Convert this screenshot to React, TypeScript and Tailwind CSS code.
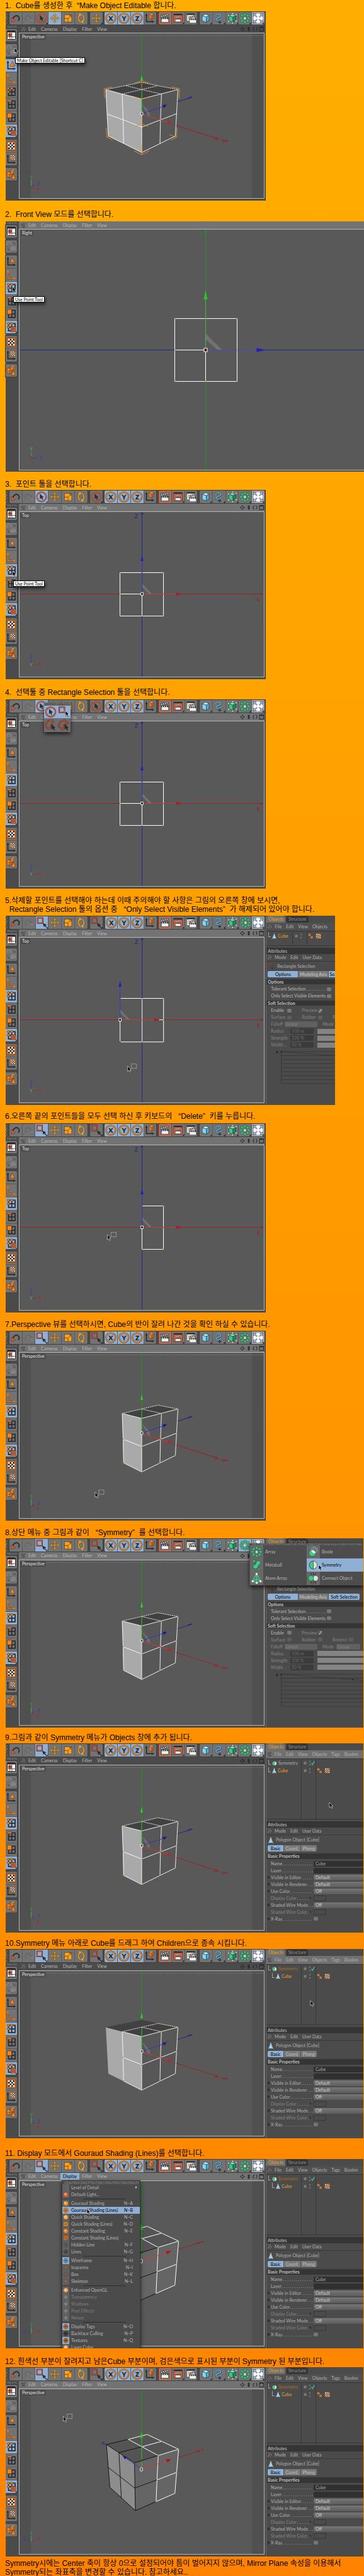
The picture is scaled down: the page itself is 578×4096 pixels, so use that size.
import React from "react";
import clsx from "clsx";

type Tool = "move" | "live" | "rect";

/* ---------- icon parts ---------- */

const INK = "#2b2b2b";
const ORANGE = "#f08326";

const Pointer = ({ x, y, s = 1 }: { x: number; y: number; s?: number }) => (
  <path
    d="M0 0V9L2.2 7L3.8 10.4L5.4 9.6L3.8 6.4H6.6Z"
    transform={`translate(${x} ${y}) scale(${s})`}
    fill={INK}
  />
);

const Axes = ({ color = INK, w = 1.8 }: { color?: string; w?: number }) => (
  <g stroke={color} fill={color} strokeWidth={w}>
    <path d="M3.5 5V15.5H13" fill="none" />
    <path d="M3.5 2.5L5 6H2ZM16 15.5L12.5 17V14Z" strokeWidth="0.5" />
  </g>
);

const Grid = () => (
  <path d="M4.5 4.5H15V16H4.5ZM9.7 4.5V16M4.5 10.2H15" fill="none" stroke={INK} strokeWidth="1.8" />
);

const Dots = () => (
  <g fill={ORANGE} stroke="#5a3212" strokeWidth="0.6">
    <circle cx="4" cy="4.5" r="1.9" />
    <circle cx="9.5" cy="4.5" r="1.9" />
    <circle cx="4" cy="10" r="1.9" />
  </g>
);

const Checker = ({ x, y, s }: { x: number; y: number; s: number }) => (
  <g transform={`translate(${x} ${y}) scale(${s})`}>
    <rect width="14" height="14" rx="0.6" fill={ORANGE} stroke="#5a2a12" strokeWidth="0.8" />
    <rect x="2" y="2" width="10" height="10" fill="#f4f4f4" />
    <path
      d="M4.5 2H7V4.5H4.5ZM9.5 2H12V4.5H9.5ZM2 4.5H4.5V7H2ZM7 4.5H9.5V7H7ZM4.5 7H7V9.5H4.5ZM9.5 7H12V9.5H9.5ZM2 9.5H4.5V12H2ZM7 9.5H9.5V12H7Z"
      fill="#1d2126"
    />
  </g>
);

const Clapper = ({ x, y, s = 1 }: { x: number; y: number; s?: number }) => (
  <g transform={`translate(${x} ${y}) scale(${s})`}>
    <path d="M0 3.2L11 0L11.6 2.4L0.8 5.6Z" fill="#f2f2f2" stroke={INK} strokeWidth="0.6" />
    <path d="M2 2.8L4 4.5M5 1.9L7 3.6M8 1L10 2.7" stroke={INK} strokeWidth="1.2" />
    <path d="M1 6H12.5V13.5H1Z" fill="#efefef" stroke={INK} strokeWidth="0.6" />
    <path d="M1 6H12.5V8.3H1Z" fill={INK} />
    <path d="M2.4 8L3.6 6.2M5.6 8L6.8 6.2M8.8 8L10 6.2" stroke="#f2f2f2" strokeWidth="1.1" />
  </g>
);

const Box = ({ x, y, s = 1, face, top, side }: { x: number; y: number; s?: number; face: string; top: string; side: string }) => (
  <g transform={`translate(${x} ${y}) scale(${s})`} stroke="#26323a" strokeWidth="0.6" strokeLinejoin="round">
    <path d="M0 2.5L6.5 4.5V13L0 10.5Z" fill={face} />
    <path d="M6.5 4.5L11 2V9.8L6.5 13Z" fill={side} />
    <path d="M0 2.5L5 0L11 2L6.5 4.5Z" fill={top} />
  </g>
);

const Flower = () => (
  <g fill="#3fc07e" stroke="#1d5a3b" strokeWidth="0.6">
    <circle cx="10" cy="4" r="2.2" />
    <circle cx="14.4" cy="5.8" r="2.2" />
    <circle cx="16" cy="10" r="2.2" />
    <circle cx="14.4" cy="14.2" r="2.2" />
    <circle cx="10" cy="16" r="2.2" />
    <circle cx="5.6" cy="14.2" r="2.2" />
    <circle cx="4" cy="10" r="2.2" />
    <circle cx="5.6" cy="5.8" r="2.2" />
    <rect x="8" y="8" width="4" height="4.4" fill="#d5d5d5" stroke="#5a5a5a" />
  </g>
);

const MoveGlyph = () => (
  <path
    d="M10 2.5L12.4 5.6H10.8V9.2H14.4V7.6L17.5 10L14.4 12.4V10.8H10.8V14.4H12.4L10 17.5L7.6 14.4H9.2V10.8H5.6V12.4L2.5 10L5.6 7.6V9.2H9.2V5.6H7.6Z"
    fill="#f7a823"
    stroke="#5a3a12"
    strokeWidth="0.5"
  />
);

const LiveGlyph = () => (
  <g>
    <circle cx="10" cy="10" r="7.6" fill="none" stroke="#6b2f1e" strokeWidth="2.2" />
    <circle cx="10" cy="10" r="7.6" fill="none" stroke="#e0623c" strokeWidth="1.2" />
    <Pointer x={7.4} y={5} s={0.95} />
  </g>
);

const RectGlyph = () => (
  <g>
    <rect x="2.6" y="2.4" width="8.4" height="8.4" fill="none" stroke="#5e2417" strokeWidth="2" />
    <rect x="2.6" y="2.4" width="8.4" height="8.4" fill="none" stroke="#d9583a" strokeWidth="0.9" />
    <path d="M11 10.5L17.5 13.5L15.4 14.5L17.8 17.4L16.6 18.2L14.3 15.4L13 17.4Z" fill={INK} />
  </g>
);

const toolGlyph = { move: <MoveGlyph />, live: <LiveGlyph />, rect: <RectGlyph /> };

const AxisLetter = ({ letter }: { letter: string }) => (
  <g>
    <circle cx="10" cy="10" r="7.6" fill="none" stroke="#5c3a17" strokeWidth="2.4" />
    <circle cx="10" cy="10" r="7.6" fill="none" stroke="#ee8d33" strokeWidth="1.3" />
    <text x="10" y="13.6" textAnchor="middle" fontSize="10" fontWeight="900" fill="#20262c" stroke="#20262c" strokeWidth="0.4" fontFamily="Lato, sans-serif">
      {letter}
    </text>
  </g>
);

const Corner = () => <path d="M19.5 16.5V19.5H17Z" fill="#111" />;

/* ---------- main toolbar ---------- */

const ToolButton = ({ label, active, children }: { label: string; active?: boolean; children: React.ReactNode }) => (
  <button
    type="button"
    aria-label={label}
    className={clsx("min-w-0 flex-1 border-r border-[#585858] last:border-r-0", active ? "bg-[#8fb0d4]" : "bg-[#737373]")}
  >
    <svg viewBox="0 0 20 20" className="block h-full w-full">
      {children}
    </svg>
  </button>
);

const Group = ({ className, children }: { className: string; children: React.ReactNode }) => (
  <div className={clsx("flex h-5 overflow-hidden rounded-xs shadow-[0_0_0_1px_#3e3e3e]", className)}>{children}</div>
);

const Grip = ({ className }: { className: string }) => (
  <span className={clsx("block bg-[repeating-linear-gradient(115deg,#808080_0_1px,#3e3e3e_1px_2px)]", className)} />
);

const Toolbar = ({ tool, recent, arrayOpen }: { tool: Tool; recent: Tool; arrayOpen?: boolean }) => (
  <div className="flex h-[22px] items-start justify-between bg-[#4b4b4b] pt-px pr-[2px]">
    <Grip className="h-5 w-[2px]" />
    <Group className="w-[124px]">
      <ToolButton label="Undo">
        <path d="M5 12C7 6 12 4.5 14.5 7.5C16.5 10 15.5 12.5 14 14" fill="none" stroke={INK} strokeWidth="1.8" />
        <path d="M3 9L9.5 14L3.2 16Z" fill="#dc5a3a" stroke="#5e2417" strokeWidth="0.5" />
      </ToolButton>
      <ToolButton label="Redo">
        <path d="M15 12C13 6 8 4.5 5.5 7.5C3.5 10 4.5 12.5 6 14" fill="none" stroke="#686868" strokeWidth="1.8" />
        <path d="M17 9L10.5 14L16.8 16Z" fill="#7e7e7e" stroke="#666" strokeWidth="0.5" />
      </ToolButton>
      <ToolButton label="Selection" active={tool !== "move"}>
        {tool === "rect" ? <RectGlyph /> : <LiveGlyph />}
        <Corner />
      </ToolButton>
      <ToolButton label="Move" active={tool === "move"}>
        <MoveGlyph />
      </ToolButton>
      <ToolButton label="Scale">
        <rect x="4.5" y="4.5" width="11.5" height="11.5" fill="#f5a321" stroke="#5a3a12" strokeWidth="0.6" />
        <path d="M4.5 10.5H10V16M10 10.5L15 5.5M12 5.5H15V8.5" fill="none" stroke="#6b4210" strokeWidth="0.9" />
      </ToolButton>
      <ToolButton label="Rotate">
        <g fill="none" stroke="#5a3a12" strokeWidth="2.6">
          <path d="M8.5 15.5A6 6.6 0 0 1 7.5 4.8M11.5 4.5A6 6.6 0 0 1 12.5 15.2" />
        </g>
        <g fill="none" stroke="#f5a321" strokeWidth="1.8">
          <path d="M8.5 15.5A6 6.6 0 0 1 7.5 4.8M11.5 4.5A6 6.6 0 0 1 12.5 15.2" />
        </g>
        <path d="M6 2.5L11 3.5L7.5 7ZM14 17.5L9 16.5L12.5 13Z" fill="#f5a321" />
      </ToolButton>
    </Group>
    <Group className="w-5">
      <ToolButton label="Recent tool">
        {toolGlyph[recent]}
        <Corner />
      </ToolButton>
    </Group>
    <Group className="w-[82px]">
      {["X", "Y", "Z"].map((letter) => (
        <ToolButton key={letter} label={`Lock ${letter}`} active>
          <AxisLetter letter={letter} />
        </ToolButton>
      ))}
      <ToolButton label="Coordinate system">
        <Axes />
        <Box x={7.5} y={2} s={0.75} face="#e87722" side="#c65f16" top="#f29b4e" />
      </ToolButton>
    </Group>
    <Group className="w-[61px]">
      <ToolButton label="Render view">
        <rect x="1" y="1" width="18" height="18" fill="none" stroke="#e2603a" strokeWidth="1.6" />
        <Clapper x={3.4} y={3} />
      </ToolButton>
      <ToolButton label="Render region">
        <rect x="3" y="3" width="13.5" height="13.5" fill="#e2603a" stroke="#5e2417" strokeWidth="0.6" />
        <path d="M3 3H16.5V5.2H3Z" fill={INK} />
        <Clapper x={5} y={6} s={0.72} />
        <Corner />
      </ToolButton>
      <ToolButton label="Render settings">
        <rect x="2.5" y="2.5" width="13" height="12" fill="#ececec" stroke="#444" strokeWidth="0.6" />
        <path d="M2.5 2.5H15.5V4.7H2.5Z" fill={INK} />
        <path d="M3.5 6.5H7M3.5 9H7M3.5 11.5H7" stroke="#e8a23d" strokeWidth="1" />
        <Clapper x={6} y={5} s={0.95} />
      </ToolButton>
    </Group>
    <Group className="w-[103px]">
      <ToolButton label="Primitives">
        <Box x={4.2} y={3.5} s={1} face="#8ed4ef" side="#4fa9cf" top="#bfe9f8" />
        <Corner />
      </ToolButton>
      <ToolButton label="Splines">
        <path d="M4 5.5C7 1.5 14 3 12.5 7C11.5 10 4.5 8.5 5 12C5.4 14.5 9 14 14.5 10.5" fill="none" stroke="#1f3a4c" strokeWidth="2.4" />
        <path d="M4 5.5C7 1.5 14 3 12.5 7C11.5 10 4.5 8.5 5 12C5.4 14.5 9 14 14.5 10.5" fill="none" stroke="#79c4e6" strokeWidth="1.3" />
        <path d="M11 14V19M8.5 16.5H13.5" stroke="#1a1a1a" strokeWidth="0.9" />
        <Corner />
      </ToolButton>
      <ToolButton label="Generators">
        <Box x={4.6} y={3.5} s={1} face="#3fc585" side="#1f8a58" top="#7fe0b0" />
        <g fill="#fff">
          <circle cx="4.2" cy="5.5" r="0.9" />
          <circle cx="10.5" cy="2.5" r="0.9" />
          <circle cx="16" cy="4.5" r="0.9" />
          <circle cx="16" cy="14.5" r="0.9" />
          <circle cx="10.5" cy="17.5" r="0.9" />
          <circle cx="4.2" cy="15" r="0.9" />
        </g>
        <Corner />
      </ToolButton>
      <ToolButton label="Array objects" active={arrayOpen}>
        <Flower />
        <Corner />
      </ToolButton>
      <ToolButton label="Environment">
        <rect width="20" height="20" fill="#a9a9a9" />
        <circle cx="10" cy="10" r="7.5" fill="#fff" />
        <g fill="#b4cdec" stroke="#2c3c5c" strokeWidth="0.7">
          <path d="M2 2L7 3.2L5.6 4.6L8.5 7.5L7.5 8.5L4.6 5.6L3.2 7Z" />
          <path d="M18 2L13 3.2L14.4 4.6L11.5 7.5L12.5 8.5L15.4 5.6L16.8 7Z" />
          <path d="M2 18L7 16.8L5.6 15.4L8.5 12.5L7.5 11.5L4.6 14.4L3.2 13Z" />
          <path d="M18 18L13 16.8L14.4 15.4L11.5 12.5L12.5 11.5L15.4 14.4L16.8 13Z" />
        </g>
        <Corner />
      </ToolButton>
    </Group>
  </div>
);

/* ---------- left rail ---------- */

const RailButton = ({ label, active, children }: { label: string; active?: boolean; children: React.ReactNode }) => (
  <button
    type="button"
    aria-label={label}
    className={clsx("min-h-0 flex-1 border-b border-[#585858] last:border-b-0", active ? "bg-[#8fb0d4]" : "bg-[#737373]")}
  >
    <svg viewBox="0 0 18 20" className="block h-full w-full">
      {children}
    </svg>
  </button>
);

const RailGroup = ({ className, children }: { className: string; children: React.ReactNode }) => (
  <div className={clsx("flex flex-col overflow-hidden rounded-r-xs shadow-[0_0_0_1px_#3e3e3e]", className)}>{children}</div>
);

const Rail = ({ mode }: { mode: "model" | "points" }) => (
  <div className="flex w-[18px] flex-col gap-1">
    <Grip className="mt-px -mb-[2px] ml-px h-[3px]" />
    <RailGroup className="h-5">
      <RailButton label="Layout">
        <rect x="2.5" y="3" width="13" height="13.5" rx="0.8" fill="#f4f4f4" stroke="#222" strokeWidth="0.9" />
        <path d="M2.5 3H15.5V5.5H2.5Z" fill="#222" />
        <path d="M3.8 6.8H9.6V12.2H3.8Z" fill="#e8632c" />
        <path d="M6.7 6V15.5M3.5 9.5H9.8M9.8 6V15.5M3.5 12.6H15" stroke="#222" strokeWidth="0.7" fill="none" />
      </RailButton>
    </RailGroup>
    <RailGroup className="h-5">
      <RailButton label="Make editable">
        <g fill="none" stroke="#8d8d8d" strokeWidth="0.9">
          <circle cx="5" cy="6" r="3.6" />
          <circle cx="12" cy="14" r="4" />
          <path d="M8 14H16M12 10V18M9.5 11C11 13 11 15 9.5 17M14.5 11C13 13 13 15 14.5 17" />
        </g>
        <g fill="none" stroke="#4f4f4f" strokeWidth="0.8">
          <path d="M2 9C4 10.5 7 10 8 8M11 3L15 6M15 3.4V6.2H12M2 12L6 15.5M6 12.8V15.6H3M8.5 16.5C10 18.6 14 18.6 16 15.5" />
        </g>
      </RailButton>
    </RailGroup>
    <RailGroup className="h-[124px]">
      <RailButton label="Model" active={mode === "model"}>
        <Axes />
        <path d="M10.5 3.5L14.6 11.5H6.4Z" fill={ORANGE} stroke="#5a3212" strokeWidth="0.6" />
      </RailButton>
      <RailButton label="Object axis">
        <Axes color="#5a3212" w={2.2} />
        <Axes color={ORANGE} w={1.2} />
      </RailButton>
      <RailButton label="Points" active={mode === "points"}>
        <Grid />
        <Dots />
      </RailButton>
      <RailButton label="Edges">
        <Grid />
        <rect x="2" y="3" width="7.5" height="2.8" fill="#e8763a" stroke="#5a3212" strokeWidth="0.6" />
      </RailButton>
      <RailButton label="Polygons">
        <Grid />
        <rect x="2.4" y="3" width="7.2" height="7.4" fill={ORANGE} stroke="#5a3212" strokeWidth="0.7" />
      </RailButton>
      <RailButton label="Auto switching" active>
        <Grid />
        <Dots />
        <rect x="8.5" y="9.5" width="7.5" height="7.8" fill="#e8763a" stroke="#5a2412" strokeWidth="0.8" />
        <rect x="10.7" y="11.8" width="3" height="3.2" fill="none" stroke="#5a2412" strokeWidth="0.8" />
        <path d="M17.8 17V19.8H15.5Z" fill="#111" />
      </RailButton>
    </RailGroup>
    <RailGroup className="h-[41px]">
      <RailButton label="Texture">
        <Checker x={2} y={3} s={1} />
      </RailButton>
      <RailButton label="Texture axis">
        <Axes />
        <Checker x={7} y={3} s={0.62} />
      </RailButton>
    </RailGroup>
    <RailGroup className="h-5">
      <RailButton label="Object">
        <g stroke="#5a3212" strokeWidth="0.7">
          <circle cx="5.8" cy="10.4" r="4.4" fill={ORANGE} />
          <path d="M1.5 10C4 11.6 8 11.6 10 10M6.4 6C7.6 8.6 7.2 12.6 5.6 14.8" fill="none" />
          <Box x={8.2} y={2.2} s={0.6} face="#f08326" side="#cc6a1a" top="#f6a45c" />
          <path d="M12.2 9.8L15.8 16.6C14.6 18.4 10 18.4 8.8 16.8Z" fill={ORANGE} />
        </g>
      </RailButton>
    </RailGroup>
  </div>
);

/* ---------- view header ---------- */

const viewMenus = ["Edit", "Cameras", "Display", "Filter", "View"];

const ViewHeader = ({ dark, open, nav = true }: { dark?: boolean; open?: string; nav?: boolean }) => (
  <div className={clsx("flex h-3 items-center pl-[4px]", dark ? "bg-[#4b4b4b]" : "bg-[#737373]")}>
    <Grip className="mr-px h-[7px] w-[6px]" />
    {viewMenus.map((menu) => (
      <button
        key={menu}
        type="button"
        className={clsx("h-[11px] px-1 leading-[11px]", open === menu ? "bg-[#8fb0d4] text-black" : "text-[#b8b8b8]")}
      >
        {menu}
      </button>
    ))}
    {nav && (
      <svg viewBox="0 0 40 10" className="ml-auto h-[10px] w-10" fill="none" stroke="#2a2a2a" strokeWidth="1.1">
        <path d="M5 1.5L6.4 3.3H3.6ZM5 8.5L6.4 6.7H3.6ZM1.5 5L3.3 3.6V6.4ZM8.5 5L6.7 3.6V6.4Z" fill="#2a2a2a" strokeWidth="0.3" />
        <path d="M15 1.5L17 4H15.7V6H17L15 8.5L13 6H14.3V4H13Z" fill="#2a2a2a" strokeWidth="0.4" />
        <path d="M23.6 8A3.2 3.2 0 0 1 24 2.2M26.4 2A3.2 3.2 0 0 1 26 7.8" />
        <rect x="32" y="1.8" width="6.4" height="6.6" />
        <path d="M32 2.4H38.4" strokeWidth="1.6" />
      </svg>
    )}
  </div>
);

/* ---------- viewport drawings ---------- */

const Cursor = ({ x, y, marquee }: { x: number; y: number; marquee?: boolean }) => (
  <g transform={`translate(${x} ${y})`}>
    {marquee && <rect x="6" y="-3.5" width="8" height="7" fill="none" stroke="#eee" strokeWidth="0.8" strokeDasharray="1 1" />}
    <path d="M0 0V8L1.8 6.4L3.2 9.4L4.6 8.8L3.4 5.8H5.6Z" fill="#000" stroke="#fff" strokeWidth="0.6" />
  </g>
);

const PointerIcon = ({ className }: { className: string }) => (
  <svg viewBox="-1 -1 8 12" className={clsx("absolute z-20 h-3 w-2", className)}>
    <Cursor x={0} y={0} />
  </svg>
);

const Gizmo = ({ kind }: { kind: "persp" | "turned" | "top" }) => (
  <g fontSize="7" fontFamily="Lato, sans-serif" textAnchor="middle" strokeWidth="0.8">
    {kind === "top" ? (
      <>
        <path d="M19.5 242V234" stroke="#3a35b5" />
        <path d="M21 244H30" stroke="#b02626" />
        <text x="19.5" y="232.5" fill="#3a35b5">Z</text>
        <text x="34.5" y="247" fill="#b02626">X</text>
        <text x="19.5" y="247" fill="#45c045">Y</text>
      </>
    ) : (
      <>
        <path d="M19.5 244V234" stroke="#45c045" />
        <text x="19.5" y="232.5" fill="#36a336">Y</text>
        <path d={kind === "persp" ? "M19.5 244L26 242" : "M19.5 244L13 241"} stroke="#3a35b5" />
        <path d={kind === "persp" ? "M19.5 244L26 247" : "M19.5 244L28 241"} stroke="#b02626" />
        <text x={kind === "persp" ? 31 : 9} y={kind === "persp" ? 243 : 242} fill="#3a35b5">Z</text>
        <text x={kind === "persp" ? 31 : 32} y={kind === "persp" ? 252 : 243} fill="#b02626">X</text>
      </>
    )}
  </g>
);

const Points = ({ at, fill = "#c98a1c" }: { at: number[][]; fill?: string }) => (
  <g fill={fill}>
    {at.map(([x, y]) => (
      <rect key={`${x}-${y}`} x={x - 0.8} y={y - 0.8} width="1.7" height="1.7" />
    ))}
  </g>
);

const SafeFrame = ({ dashed = true }: { dashed?: boolean }) => (
  <g>
    <rect width="19" height="264" fill="#505050" />
    <rect x="370" width="20" height="264" fill="#505050" />
    {dashed && <path d="M40 4.5H390" stroke="#7a7a7a" strokeWidth="0.8" strokeDasharray="2 1" />}
  </g>
);

const PerspectiveScene = ({ shape, cursor }: { shape: "full" | "half" | "mirrored"; cursor?: number[] }) => (
  <>
    <SafeFrame />
    <path d="M195 0V90" stroke="#2a8f2a" strokeWidth="1" />
    {shape !== "half" && (
      <>
        <path d="M138 90.4L195 105.3V190.5L142 164.2Z" fill="#a9a9a9" />
        <path d="M195 78.8L252.5 90.4L195 105.3L138 90.4Z" fill="#414141" />
      </>
    )}
    {shape === "half" && (
      <>
        <path d="M164 97.5L195 105.3V190.5L166.2 176Z" fill="#a9a9a9" />
        <path d="M164 97.5L220.8 84.3L252.5 90.4L195 105.3Z" fill="#414141" />
      </>
    )}
    <path d="M195 105.3L252.5 90.4L248.4 164.2L195 190.5Z" fill="#575757" />
    <path d="M195 113L207 126L208.5 132.5L205 132Z" fill="#6f6f6f" />
    <g fill="none" stroke="#fff" strokeWidth="0.9">
      <path d="M164 97.5L195 105.3L252.5 90.4L250.3 128.8L248.4 164.2L195 190.5L166.2 176" />
      <path d="M195 128V190.5M226.3 97.5L224.8 138.4L224 176M250.3 128.8L195 150L165.5 138.4M164 97.5L165.5 138.4L166.2 176" />
      <path d="M164 97.5L220.8 84.3L252.5 90.4M195 90.4L226.3 97.5" strokeDasharray="2 1" />
      {shape === "full" && (
        <>
          <path d="M164 97.5L138 90.4L140 129.3L142 164.2L166.2 176M140 129.3L165.5 138.4" />
          <path d="M138 90.4L195 78.8L220.8 84.3M170.3 84.3L195 90.4" strokeDasharray="2 1" />
        </>
      )}
    </g>
    {shape === "full" ? (
      <path
        d="M136 104L135.5 89L148 86M139 90L144 92M242 86L255 89L254.5 104M252 90L247 92M184 80L195 76.5L206 80M182 101.5L195 105.5L208 101.5M185 149L195 145L205 149M138.5 151L139.5 166L149 171M140 166L151 162M251 151L250.5 166L241 171M250 166L239 162M183 188L195 194L207 188M195 79V90M195 133V148M195 178V194"
        fill="none"
        stroke="#d8952a"
        strokeWidth="0.9"
      />
    ) : (
      <Points
        at={[
          [164, 97.5], [220.8, 84.3], [252.5, 90.4], [226.3, 97.5], [195, 105.8], [165.5, 138.4], [195, 150],
          [224.8, 138.4], [250.3, 128.8], [166.2, 176], [195, 190.5], [224, 176], [248.4, 164.2],
        ]}
      />
    )}
    <path d="M195 90V126" stroke="#35c435" strokeWidth="1" />
    <path d="M195 67L196.8 76H193.2Z" fill="#22dd22" />
    <path d="M197 128L230 117" stroke="#3434c0" strokeWidth="1" />
    <path d="M235 114.5L228 115L230.5 119.6Z" fill="#17178e" />
    <path d="M251.7 109.8L274 103M268 103.5L276 102.6M269 105L274 101.5" stroke="#24248e" strokeWidth="1" />
    <path d="M197 130.5L238 142.5" stroke="#d23434" strokeWidth="1" />
    <path d="M245 145.5L235.5 144.5L237.5 140.5Z" fill="#c82020" />
    <path d="M249.5 147.5L317 169M312 166L317 169.3L310 169.6M321 170.5L333 173.5M323 174L331 170" fill="none" stroke="#9c2222" strokeWidth="1" />
    <rect x="193.2" y="126.4" width="3.8" height="4.6" rx="1" fill="#555" stroke="#fff" strokeWidth="0.9" />
    <Gizmo kind="persp" />
    {cursor && <Cursor x={cursor[0]} y={cursor[1]} marquee />}
  </>
);

const TurnedScene = ({ cursor }: { cursor?: number[] }) => (
  <>
    <SafeFrame dashed={false} />
    <path d="M195 0V68" stroke="#1f9a1f" strokeWidth="1" />
    <path d="M139 89L183.6 118.1L185 194.1L144.5 156.9Z" fill="#8d8d8d" />
    <path d="M183.6 118.1L253.6 96.5L247.7 166.6L185 194.1Z" fill="#656565" />
    <path d="M139 89L203.8 73L253.6 96.5L183.6 118.1Z" fill="#545454" />
    <g fill="none" stroke="#0c0c0c" strokeWidth="0.9">
      <path d="M173.6 80.7L139 89L183.6 118.1L221.2 106.4M158.9 101.9L195 92.6" />
      <path d="M139 89L144.5 156.9L185 194.1L217.8 179.7M158.9 101.9L162.6 173.1M183.6 118.1L185 194.1M141.9 125.3L183.9 158.2L219.3 145.2" />
    </g>
    <g fill="none" stroke="#fff" strokeWidth="1">
      <path d="M173.6 80.7L203.8 73L253.6 96.5L247.7 166.6L217.8 179.7L221.2 106.4L173.6 80.7" />
      <path d="M226.7 83.9L195 92.6M221.2 106.4L253.6 96.5M219.3 145.2L250.7 133.2" />
    </g>
    <Points
      at={[[173.6, 80.7], [203.8, 73], [226.7, 83.9], [253.6, 96.5], [221.2, 106.4], [219.3, 145.2], [250.7, 133.2], [217.8, 179.7], [247.7, 166.6]]}
    />
    <path d="M195 78V112M195 117V123" stroke="#35c435" strokeWidth="1" />
    <path d="M194.6 68L197 78.5H192.5Z" fill="#22cc22" />
    <path d="M193.5 127L169 110" stroke="#3434c0" strokeWidth="1" />
    <path d="M165 107L171 108.6L168.4 112.8Z" fill="#17178e" />
    <path d="M131 85L139 90M133 89L137 86M132 87.5L134 84.5" stroke="#24248e" strokeWidth="0.9" />
    <path d="M197 127.5L235 115" stroke="#d23434" strokeWidth="1" />
    <path d="M242 112L233 112.6L236 117.4Z" fill="#a81818" />
    <path d="M253.6 109.3L288 98.7M282 98.8L288 98.6L284 101.4M289 98L294 96.5M290 96L293 98.5" fill="none" stroke="#9c2222" strokeWidth="1" />
    <rect x="192.7" y="125.6" width="3.6" height="5.6" rx="1" fill="#555" stroke="#fff" strokeWidth="0.9" />
    <Gizmo kind="turned" />
    {cursor && <Cursor x={cursor[0]} y={cursor[1]} marquee />}
  </>
);

const TopScene = ({ shape, cursor }: { shape: "whole" | "selected" | "cut"; cursor?: number[] }) => {
  const ox = shape === "selected" ? 160.5 : 195.5;
  return (
    <>
      <path d="M195.5 3V264" stroke="#24248e" strokeWidth="1" />
      <path d="M195.5 1L197.8 4.5H193.2Z" fill="#24248e" />
      <path d="M0 131.5H386" stroke="#9c2222" strokeWidth="1" />
      <path d="M388 131.5L384 129.6V133.4Z" fill="#9c2222" />
      <path d={`M${ox} 115L${ox + 16} 131.5H${ox + 11}L${ox} 120Z`} fill="#727272" />
      <g fill="none" stroke="#fff" strokeWidth="1">
        {shape === "whole" && <path d="M160.5 97.5H229.5V166.5H160.5ZM160.5 131.5H195.5V166.5" />}
        {shape === "selected" && <path d="M160.5 97.5H229.5V166.5H160.5V131.5M195.5 97.5V166.5M222 131.5H229.5" />}
        {shape === "cut" && <path d="M195.5 97.5H229.5V166.5H195.5V131.5" />}
      </g>
      <Points at={[[195.5, 97.5], [229.5, 97.5], [229.5, 131.5], [229.5, 166.5], [195.5, 166.5]]} />
      {shape !== "cut" && (
        <Points at={[[160.5, 97.5], [160.5, 131.5], [160.5, 166.5]]} fill={shape === "selected" ? "#b01818" : "#c98a1c"} />
      )}
      <path d={`M${ox} 129V78`} stroke="#3a35d0" strokeWidth="1" />
      <path d={`M${ox} 70L${ox + 2.2} 79H${ox - 2.2}Z`} fill="#1d1dc0" />
      <path d={`M${ox + 2} 131.5H${ox + 56}`} stroke="#d23434" strokeWidth="1" />
      <path d={`M${ox + 63} 131.5L${ox + 54} 129V134Z`} fill="#b81818" />
      <rect x={ox - 1.8} y="129.2" width="3.6" height="4.4" fill="#111" stroke="#fff" strokeWidth="0.9" />
      <g fontSize="9" fontFamily="Lato, sans-serif" textAnchor="middle">
        <text x="186.5" y="11" fill="#24248e">Z</text>
        <text x="380" y="144" fill="#9c2222">X</text>
      </g>
      <Gizmo kind="top" />
      {cursor && <Cursor x={cursor[0]} y={cursor[1]} marquee />}
    </>
  );
};

const RightScene = () => (
  <>
    <path d="M296.5 3V384" stroke="#2a8f2a" strokeWidth="1" />
    <path d="M296.5 1.5L298.8 5H294.2Z" fill="#2a8f2a" />
    <path d="M0 192.5H548" stroke="#24248e" strokeWidth="1" />
    <path d="M297 167L323 192.5H315L297 176Z" fill="#727272" />
    <path d="M247.5 142.5H346.5V242.5H247.5ZM247.5 192.5H296.5V242.5" fill="none" stroke="#fff" strokeWidth="1" />
    <path d="M296.5 190V110" stroke="#45c045" strokeWidth="1" />
    <path d="M296.5 97L299.3 112H293.7Z" fill="#22cc22" />
    <path d="M299 192.5H378" stroke="#4a45d0" strokeWidth="1" />
    <path d="M392 192.5L377.5 189.4V195.8Z" fill="#1d1dc0" />
    <Points at={[[247.5, 142.5], [296.5, 142.5], [346.5, 142.5], [247.5, 192.5], [346.5, 192.5], [247.5, 242.5], [296.5, 242.5], [346.5, 242.5]]} />
    <rect x="294" y="189.8" width="5" height="5.4" fill="#4a1018" stroke="#fff" strokeWidth="1" />
    <g fontSize="7" fontFamily="Lato, sans-serif" textAnchor="middle" strokeWidth="0.8">
      <text x="288" y="11" fill="#2a8f2a">Y</text>
      <path d="M20 362V355" stroke="#45c045" />
      <path d="M21 364.5H30" stroke="#3a35b5" />
      <text x="20" y="353" fill="#45c045">Y</text>
      <text x="20" y="367" fill="#b02626">X</text>
      <text x="35" y="367" fill="#3a35b5">Z</text>
    </g>
  </>
);

const Viewport = ({ label, wide, children }: { label: string; wide?: boolean; children: React.ReactNode }) => (
  <div className={clsx("relative border-[#b4bab2] bg-[#595959]", wide ? "border-y border-l" : "border")}>
    <span className="absolute top-px left-[2px] rounded-xs bg-[#4a4a4a] px-[2px] leading-[9px] text-[#e0e0e0]">{label}</span>
    <svg viewBox={wide ? "1 1 547 382" : "1 1 388 262"} className="block h-auto w-full">
      {children}
    </svg>
  </div>
);

/* ---------- right side: objects and attributes ---------- */

const Bar = ({ className, children }: { className?: string; children: React.ReactNode }) => (
  <div className={clsx("bg-[#353535] pl-[2px] text-[#c0c0c0]", className)}>{children}</div>
);

const MenuRow = ({ items, className }: { items: string[]; className: string }) => (
  <div className={clsx("flex items-center pl-[2px] whitespace-nowrap", className)}>
    <Grip className="mr-px h-[7px] w-[6px] shrink-0" />
    {items.map((item) => (
      <button key={item} type="button" className="pr-[3px] pl-1 text-[#b0b0b0]">
        {item}
      </button>
    ))}
  </div>
);

const ConeIcon = ({ className }: { className: string }) => (
  <svg viewBox="0 0 10 12" className={clsx("shrink-0", className)}>
    <path d="M5 1L8.6 10C7 11.2 3 11.2 1.4 10Z" fill="#8fd6f2" stroke="#dff4fb" strokeWidth="0.5" />
    <path d="M5 0V2M0 11H2M8 11H10" stroke="#fff" strokeWidth="0.9" />
  </svg>
);

const SymmetryIcon = ({ className }: { className: string }) => (
  <svg viewBox="0 0 12 12" className={clsx("shrink-0", className)}>
    <circle cx="6" cy="6" r="5" fill="#e4e4e4" stroke="#2c4a3c" strokeWidth="0.6" />
    <path d="M6 1A5 5 0 0 0 6 11Z" fill="#45c98a" />
    <path d="M6 1V11" stroke="#2c4a3c" strokeWidth="0.6" />
  </svg>
);

const Flags = ({ checked }: { checked?: boolean }) => (
  <svg viewBox="0 0 22 11" className="h-[11px] w-[22px] shrink-0">
    <circle cx="5.5" cy="5.5" r="2.4" fill="#787878" />
    <circle cx="13" cy="3" r="1.2" fill="#787878" />
    <circle cx="13" cy="8" r="1.2" fill="#787878" />
    {checked && <path d="M15.5 5.5L17.2 8L20.5 2.5" fill="none" stroke="#3fd492" strokeWidth="1.2" />}
  </svg>
);

const Tags = () => (
  <svg viewBox="0 0 24 11" className="h-[11px] w-6 shrink-0">
    <circle cx="3.5" cy="3.5" r="2" fill="#c97a33" />
    <circle cx="7" cy="7.5" r="2" fill="#c97a33" />
    <Checker x={13.5} y={1.2} s={0.6} />
  </svg>
);

const ObjectRow = ({ name, nested, dim, cube, narrow }: { name: string; nested?: boolean; dim?: boolean; cube?: boolean; narrow?: boolean }) => (
  <div className="flex h-3 items-center">
    <div className={clsx("flex h-full items-center gap-[2px]", narrow ? "w-[41px]" : "w-[55px]", nested ? "pl-[9px]" : "pl-[3px]")}>
      <span className="mb-1 h-2 w-[4px] shrink-0 border-b border-l border-[#a0a0a0]" />
      {cube ? <ConeIcon className="h-[9px] w-[7px]" /> : <SymmetryIcon className="h-2 w-2" />}
      <span className={cube ? "text-[#f0a020]" : dim ? "text-[#a8701c]" : "text-[#b0b0b0]"}>{name}</span>
    </div>
    <div className="flex h-full items-center border-x border-[#383838]">
      <Flags checked={!cube} />
    </div>
    {cube && <Tags />}
  </div>
);

const allMenus = ["File", "Edit", "View", "Objects", "Tags", "Bookm"];

const ObjectsHead = ({ light, menus = allMenus }: { light?: boolean; menus?: string[] }) => (
  <>
    <div className="flex h-[11px] gap-[2px] leading-[11px]">
      <button type="button" className="rounded-t-sm bg-[#6f6f6f] px-[3px] text-[#f0a020]">Objects</button>
      <button type="button" className="rounded-t-sm bg-[#353535] px-[3px] text-[#8f8f8f]">Structure</button>
    </div>
    <MenuRow items={menus} className={clsx("h-[14px] border-b border-[#353535]", light ? "bg-[#707070]" : "bg-[#505050]")} />
  </>
);

const Leader = () => (
  <span className="mx-px mt-1 h-px min-w-0 flex-1 bg-[repeating-linear-gradient(90deg,#8a8a8a_0_1px,transparent_1px_3px)]" />
);

const fieldClass = "h-[9px] min-w-0 flex-1 rounded-l-xs pl-[3px] text-[7px] leading-[9px]";

const PropertyRow = ({ label, kind, value }: { label: string; kind: "text" | "select" | "color" | "check"; value?: string }) => {
  const keyed = kind === "select" || kind === "check";
  return (
    <label className={clsx("flex h-[11px] items-center", kind === "color" ? "text-[#858585]" : "text-[#b0b0b0]")}>
      <span className="flex w-[75px] shrink-0 items-center pl-[2px] whitespace-nowrap">
        <span className={clsx("mr-[2px] h-[4px] w-[3px] rounded-full border", keyed ? "border-[#151515]" : "border-transparent")} />
        {label}
        <Leader />
        {kind === "color" && <span className="mr-1 h-0 w-0 border-y-2 border-l-2 border-y-transparent border-l-[#222]" />}
      </span>
      {kind === "text" && <input type="text" defaultValue={value} className={clsx(fieldClass, "bg-[#303030] text-[#a8a8a8]")} />}
      {kind === "select" && (
        <select defaultValue={value} className={clsx(fieldClass, "appearance-none bg-linear-to-b from-[#777] to-[#5c5c5c] text-[#d0d0d0]")}>
          <option>{value}</option>
        </select>
      )}
      {kind === "color" && <input type="button" aria-label={label} className="h-[9px] w-5 border border-[#383838]" />}
      {kind === "check" && <input type="checkbox" className="h-[6px] w-[7px] appearance-none rounded-xs bg-[#757575]" />}
    </label>
  );
};

const CubeSide = ({ nested, light }: { nested?: boolean; light?: boolean }) => (
  <aside className="min-w-0 border-l border-[#6a6a6a] bg-[#4b4b4b]">
    <ObjectsHead light={light} />
    <div className="flex h-24 flex-col border-b border-[#383838] pt-px">
      <ObjectRow name="Symmetry" dim={nested} />
      <ObjectRow name="Cube" cube nested={nested} />
      <div className="ml-[55px] w-6 flex-1 border-x border-[#383838]" />
    </div>
    <Bar className="mt-[3px] h-[10px] leading-[10px]">Attributes</Bar>
    <MenuRow items={["Mode", "Edit", "User Data"]} className="h-3 border-b border-[#383838]" />
    <div className="flex h-4 items-center gap-1 pl-[3px] text-[#b0b0b0]">
      <ConeIcon className="h-[10px] w-2" />
      Polygon Object [Cube]
    </div>
    <div className="ml-[2px] flex h-[10px] w-[78px] leading-[10px] text-[#c0c0c0]">
      <button type="button" className="flex-1 rounded-l-xs bg-[#8fb0d4] text-black">Basic</button>
      <button type="button" className="flex-1 border-x border-[#555] bg-[#787878]">Coord.</button>
      <button type="button" className="flex-1 rounded-r-xs bg-[#787878]">Phong</button>
    </div>
    <Bar className="mt-[3px] mb-[2px] h-[9px] leading-[9px] font-bold">Basic Properties</Bar>
    <PropertyRow label="Name" kind="text" value="Cube" />
    <PropertyRow label="Layer" kind="text" value="" />
    <PropertyRow label="Visible in Editor" kind="select" value="Default" />
    <PropertyRow label="Visible in Renderer" kind="select" value="Default" />
    <PropertyRow label="Use Color" kind="select" value="Off" />
    <PropertyRow label="Display Color" kind="color" />
    <PropertyRow label="Shaded Wire Mode" kind="select" value="Off" />
    <PropertyRow label="Shaded Wire Color" kind="color" />
    <PropertyRow label="X-Ray" kind="check" />
  </aside>
);

const Check = ({ label, checked, dim, className, leader }: { label: string; checked?: boolean; dim?: boolean; className?: string; leader?: boolean }) => (
  <label className={clsx("flex shrink-0 items-center justify-between whitespace-nowrap", dim ? "text-[#858585]" : "text-[#b8b8b8]", className)}>
    {label}
    {leader && <Leader />}
    <input
      type="checkbox"
      defaultChecked={checked}
      className={clsx(
        "h-[6px] w-[7px] shrink-0 appearance-none rounded-xs",
        dim ? "bg-[#5e5e5e]" : "bg-[#787878]",
        "checked:bg-[linear-gradient(125deg,transparent_45%,#aaa_45%,#aaa_60%,transparent_60%)]",
      )}
    />
  </label>
);

const SliderRow = ({ label, value }: { label: string; value: string }) => (
  <label className="flex h-[11px] items-center pl-[7px] text-[#858585]">
    <span className="w-[31px] shrink-0">{label}</span>
    <input type="text" defaultValue={value} className="h-[9px] w-[37px] shrink-0 rounded-xs bg-[#3b3b3b] pl-[2px] text-[7px] leading-[9px] text-[#6f6f6f]" />
    <span className="ml-[6px] h-[8px] flex-1 bg-[#848484]" />
  </label>
);

/* compact: the column is narrow, so only the controls that fit are laid out */
const SelectionSide = ({ compact }: { compact?: boolean }) => (
  <aside className="min-w-0 border-l border-[#6a6a6a] bg-[#4b4b4b]">
    <ObjectsHead menus={compact ? allMenus.slice(0, 4) : allMenus} />
    <div className="flex h-[23px] flex-col border-b border-[#383838] pt-px">
      <ObjectRow name="Cube" cube narrow />
      <div className="ml-[41px] w-6 flex-1 border-x border-[#383838]" />
    </div>
    <Bar className="mt-[3px] h-[10px] leading-[10px]">Attributes</Bar>
    <MenuRow items={["Mode", "Edit", "User Data"]} className="h-3 border-b border-[#383838]" />
    <div className="flex h-[15px] items-center gap-1 pl-px whitespace-nowrap text-[#b0b0b0]">
      <svg viewBox="0 0 20 20" className="h-3 w-3 shrink-0 opacity-60">
        <RectGlyph />
      </svg>
      Rectangle Selection
    </div>
    <div className="ml-[2px] flex h-[10px] leading-[10px] whitespace-nowrap text-black">
      <button type="button" className="w-12 shrink-0 rounded-l-xs bg-[#8fb0d4]">Options</button>
      <button type="button" className="w-[49px] shrink-0 border-x border-[#555] bg-[#787878] text-[#c8c8c8]">Modeling Axis</button>
      {compact ? (
        <button type="button" aria-label="Soft Selection" className="flex-1 bg-[#8fb0d4]">So</button>
      ) : (
        <button type="button" className="w-[49px] shrink-0 rounded-r-xs bg-[#8fb0d4]">Soft Selection</button>
      )}
    </div>
    <Bar className="mt-[3px] h-[8px] leading-[8px] font-bold">Options</Bar>
    <Check label="Tolerant Selection" leader className="mt-[2px] ml-[7px] h-[11px] w-[96px]" />
    <Check label="Only Select Visible Elements" className="mb-[2px] ml-[7px] h-[11px] w-[96px]" />
    <Bar className="mb-[2px] h-[8px] leading-[8px] font-bold">Soft Selection</Bar>
    <div className="flex h-[11px] gap-4 pl-[7px]">
      <Check label="Enable" className="w-[33px]" />
      <Check label="Preview" dim checked className="w-[33px]" />
    </div>
    <div className="flex h-[11px] gap-4 pl-[7px]">
      <Check label="Surface" dim className="w-[33px]" />
      <Check label="Rubber" dim className="w-[33px]" />
      {compact ? <span className="leading-[11px] text-[#858585]">R</span> : <Check label="Restrict" dim className="w-[33px]" />}
    </div>
    <div className="flex h-[11px] items-center gap-2 pl-[7px] text-[#858585]">
      <label className="flex shrink-0 items-center gap-[3px]">
        Falloff
        <select className="h-[9px] w-[52px] appearance-none rounded-xs bg-[#606060] pl-[2px] text-[7px] leading-[9px]">
          <option>Linear</option>
        </select>
      </label>
      {compact ? (
        <span>Mode</span>
      ) : (
        <label className="flex shrink-0 items-center gap-1">
          Mode
          <select className="h-[9px] w-[38px] appearance-none rounded-xs bg-[#606060] pl-[2px] text-[7px] leading-[9px]">
            <option>Group</option>
          </select>
        </label>
      )}
    </div>
    <SliderRow label="Radius" value="100 m" />
    <SliderRow label="Strength" value="100 %" />
    <SliderRow label="Width .." value="50 %" />
    <svg viewBox="0 0 155 56" className="mt-1 block h-14 w-[155px]" fill="none" stroke="#353535" strokeWidth="0.8">
      <path d="M23.5 1V52H155M23.5 1H155M23.5 7.4H155M23.5 13.8H155M23.5 20.2H155M23.5 26.6H155M23.5 33H155M23.5 39.4H155M23.5 45.8H155" />
      <path d="M23.5 1L137 9.6L155 11.5" />
      <path d="M16 -0.5L19 2L16 4.5Z" fill="#222" />
      <circle cx="23.5" cy="1.5" r="1.2" fill="#222" />
      <circle cx="137" cy="9.6" r="1.2" fill="#222" />
    </svg>
  </aside>
);

/* ---------- overlays ---------- */

const Tooltip = ({ className, children }: { className: string; children: React.ReactNode }) => (
  <div
    role="tooltip"
    className={clsx("absolute z-10 border border-black bg-white px-[2px] leading-[8px] whitespace-nowrap text-black shadow-[1px_3px_5px_rgba(0,0,0,0.6)]", className)}
  >
    {children}
  </div>
);

const SelectionPopup = () => (
  <div className="absolute top-[5px] left-[61px] z-10 w-[42px] bg-[#6c6c6c] shadow-[0_3px_6px_rgba(0,0,0,0.7)]">
    <Grip className="mx-[2px] mt-px h-[4px]" />
    <div className="grid grid-cols-2">
      <button type="button" aria-label="Live selection" className="h-5 bg-[#8fb0d4]">
        <svg viewBox="0 0 20 20" className="h-full w-full"><LiveGlyph /></svg>
      </button>
      <button type="button" aria-label="Rectangle selection" className="h-5 bg-[#8fb0d4]">
        <svg viewBox="0 0 20 20" className="h-full w-full"><RectGlyph /></svg>
      </button>
      <button type="button" aria-label="Lasso selection" className="h-[22px]">
        <svg viewBox="0 0 20 20" className="h-full w-full">
          <path d="M8 3C13 1 15 6 12 8C9 10 10 13 8 15C5 17 2 12 3 8C4 5 6 4 8 3Z" fill="none" stroke="#5e2417" strokeWidth="2.2" />
          <path d="M8 3C13 1 15 6 12 8C9 10 10 13 8 15C5 17 2 12 3 8C4 5 6 4 8 3Z" fill="none" stroke="#d9583a" strokeWidth="1" />
          <Pointer x={11} y={8} />
        </svg>
      </button>
      <button type="button" aria-label="Polygon selection" className="h-[22px]">
        <svg viewBox="0 0 20 20" className="h-full w-full">
          <path d="M4 6L11 2L16 7L10 10L8 17L2 12Z" fill="none" stroke="#5e2417" strokeWidth="2.2" />
          <path d="M4 6L11 2L16 7L10 10L8 17L2 12Z" fill="none" stroke="#d9583a" strokeWidth="1" />
          <Pointer x={11} y={8} />
        </svg>
      </button>
    </div>
  </div>
);

const arrayItems = [
  { name: "Array", icon: <Flower /> },
  {
    name: "Boole",
    icon: (
      <g strokeWidth="0.7">
        <circle cx="11.5" cy="7.5" r="5" fill="#7a7a7a" stroke="#9c9c9c" />
        <circle cx="8.5" cy="12" r="5" fill="#45c98a" stroke="#1d5a3b" />
        <path d="M7 7.5C10 7 13 9 13.4 12C11 12.6 7.5 11 7 7.5Z" fill="#f4f4f4" />
      </g>
    ),
  },
  {
    name: "Metaball",
    icon: (
      <g fill="#45c98a" stroke="#1d5a3b" strokeWidth="0.7">
        <path d="M11 4C16 2 17.5 7 14.5 9C12 10.5 13 13 10.5 15C7 17.5 3 14 5 11C6.5 9 8.5 10 8.8 8C9 6 9 5 11 4Z" />
        <circle cx="6" cy="4" r="2" />
        <circle cx="13.5" cy="16" r="1.6" />
      </g>
    ),
  },
  {
    name: "Symmetry",
    icon: (
      <g stroke="#2c4a3c" strokeWidth="0.7">
        <circle cx="10" cy="10" r="6" fill="#dcdcdc" />
        <path d="M10 4A6 6 0 0 0 10 16Z" fill="#45c98a" />
      </g>
    ),
  },
  {
    name: "Atom Array",
    icon: (
      <g fill="none" stroke="#45c98a" strokeWidth="1.4">
        <path d="M10 3.5L4 14L10 17L16 14ZM10 3.5V17M4 14L10 11.5L16 14" />
        <g fill="#fff" stroke="none">
          <circle cx="10" cy="3.5" r="1.5" />
          <circle cx="4" cy="14.5" r="1.5" />
          <circle cx="16" cy="14.5" r="1.5" />
          <circle cx="10" cy="17" r="1.5" />
        </g>
      </g>
    ),
  },
  {
    name: "Connect Object",
    icon: (
      <g>
        <circle cx="13.5" cy="10" r="4" fill="#e0e0e0" stroke="#444" strokeWidth="0.6" />
        <circle cx="6.5" cy="10" r="4" fill="#35d07e" stroke="#1d5a3b" strokeWidth="0.6" />
        <path d="M10 5V1.5M7.5 5L6 2M12.5 5L14 2M10 15V18.5M7.5 15L6 18M12.5 15L14 18" stroke="#2a2a2a" strokeWidth="1" />
      </g>
    ),
  },
];

const ArrayPopup = () => (
  <div className="absolute top-2 right-0 z-10 w-[181px] bg-[#4d4d4d] pb-px pl-px shadow-[0_3px_6px_rgba(0,0,0,0.7)]">
    <Grip className="mx-[2px] h-[3px]" />
    <div className="grid grid-cols-2">
      {arrayItems.map(({ name, icon }) => {
        const hot = name === "Symmetry";
        return (
          <button key={name} type="button" className={clsx("flex h-[21px] items-center gap-[3px]", hot ? "bg-[#8fb0d4] text-black" : "text-[#b4b4b4]")}>
            <svg viewBox="0 0 20 20" className={clsx("h-full w-[21px]", !hot && "bg-[#686868]")}>{icon}</svg>
            {name}
          </button>
        );
      })}
    </div>
    <PointerIcon className="top-[33px] left-[109px]" />
  </div>
);

type MenuItem = { name: string; keys?: string; ball?: string; wire?: string; on?: boolean; off?: boolean };

const displayMenu: MenuItem[][] = [
  [{ name: "Level of Detail" }, { name: "Default Light...", ball: "#ef6a3e" }],
  [
    { name: "Gouraud Shading", keys: "N~A", ball: "#f2983a" },
    { name: "Gouraud Shading (Lines)", keys: "N~B", ball: "#f2983a", wire: "#7a3e10" },
    { name: "Quick Shading", keys: "N~C", ball: "#f7a64a" },
    { name: "Quick Shading (Lines)", keys: "N~D", ball: "#f7a64a", wire: "#7a3e10" },
    { name: "Constant Shading", keys: "N~E", ball: "#f08326" },
    { name: "Constant Shading (Lines)", ball: "#f08326", wire: "#7a3e10" },
    { name: "Hidden Line", keys: "N~F", ball: "#6a6a6a", wire: "#3c3c3c" },
    { name: "Lines", keys: "N~G", ball: "#606060", wire: "#2c2c2c" },
  ],
  [
    { name: "Wireframe", keys: "N~H", ball: "#8fb0d4", wire: "#23415e", on: true },
    { name: "Isoparms", keys: "N~I", ball: "#606060", wire: "#9c5c2c" },
    { name: "Box", keys: "N~K", ball: "#606060", wire: "#9c4c2c" },
    { name: "Skeleton", keys: "N~L", ball: "#606060", wire: "#a8622e" },
  ],
  [
    { name: "Enhanced OpenGL", ball: "#f08326", wire: "#eeeeee" },
    { name: "Transparency", ball: "#6c6c6c", wire: "#8c8c8c", off: true },
    { name: "Shadows", ball: "#6c6c6c", wire: "#8c8c8c", off: true },
    { name: "Post Effects", ball: "#6c6c6c", wire: "#8c8c8c", off: true },
    { name: "Noises", ball: "#6c6c6c", wire: "#8c8c8c", off: true },
  ],
  [
    { name: "Display Tags", keys: "N~O", ball: "#f08326", wire: "#2b2b2b", on: true },
    { name: "Backface Culling", keys: "N~P", ball: "#444444", wire: "#2a2a2a" },
    { name: "Textures", keys: "N~Q", ball: "#f08326", wire: "#1a1a1a", on: true },
    { name: "Layer Color", ball: "#f08326", wire: "#eeeeee" },
  ],
];

const DisplayMenu = () => (
  <div className="absolute top-[34px] left-[89px] z-10 w-[125px] border border-[#3a3a3a] bg-[#4b4b4b] shadow-[0_2px_6px_rgba(0,0,0,0.7)]">
    <Grip className="mx-[2px] h-[5px]" />
    {displayMenu.map((section, index) => (
      <React.Fragment key={index}>
        {index > 0 && (
          <div className="flex h-[3px] items-center pl-[33px]">
            <span className="h-px w-[68px] bg-[#2c2c2c]" />
          </div>
        )}
        {section.map((item) => {
          const hot = item.keys === "N~B";
          return (
            <button
              key={item.name}
              type="button"
              disabled={item.off}
              className={clsx(
                "flex h-[11px] w-full items-center leading-[11px] whitespace-nowrap",
                hot ? "bg-[#8fb0d4] text-black" : item.off ? "text-[#808080]" : "text-[#b4b4b4]",
              )}
            >
              <svg viewBox="0 0 11 11" className={clsx("mr-[3px] h-[11px] w-[11px]", item.on || hot ? "bg-[#8fb0d4]" : "bg-[#626262]")}>
                {item.ball && <circle cx="5.5" cy="5.5" r="3.8" fill={item.ball} stroke="#3c3c3c" strokeWidth="0.4" />}
                {item.wire && (
                  <path d="M1.8 5.5H9.2M5.5 1.8V9.2M3.4 2.6C4.6 4.4 4.6 6.6 3.4 8.4M7.6 2.6C6.4 4.4 6.4 6.6 7.6 8.4" fill="none" stroke={item.wire} strokeWidth="0.6" />
                )}
                {item.ball && !item.wire && <circle cx="4.6" cy="4.4" r="1.6" fill="#fff" opacity="0.35" />}
              </svg>
              {item.name}
              <span className="mr-[11px] ml-auto">{item.keys}</span>
              {item.name === "Level of Detail" && (
                <span className="mr-1 h-0 w-0 border-y-2 border-l-[3px] border-y-transparent border-l-[#c8c8c8]" />
              )}
            </button>
          );
        })}
      </React.Fragment>
    ))}
    <PointerIcon className="top-[43px] left-[38px]" />
  </div>
);

/* ---------- screens and steps ---------- */

type ScreenProps = {
  width: string;
  tool?: Tool;
  recent?: Tool;
  mode?: "model" | "points";
  darkHeader?: boolean;
  openMenu?: string;
  arrayOpen?: boolean;
  label: string;
  side?: React.ReactNode;
  overlay?: React.ReactNode;
  children: React.ReactNode;
};

const Screen = ({ width, tool = "rect", recent = tool, mode = "points", darkHeader, openMenu, arrayOpen, label, side, overlay, children }: ScreenProps) => (
  <figure className={clsx("relative grid overflow-hidden bg-[#4b4b4b] text-[7px] leading-[9px]", width)}>
    <div className="min-w-0">
      <Toolbar tool={tool} recent={recent} arrayOpen={arrayOpen} />
      <div className="flex">
        <Rail mode={mode} />
        <div className="ml-[3px] min-w-0 flex-1 pr-[2px] pb-[3px]">
          <ViewHeader dark={darkHeader} open={openMenu} />
          <Viewport label={label}>{children}</Viewport>
        </div>
      </div>
    </div>
    {side}
    {overlay}
  </figure>
);

const Step = ({ title, className, children }: { title: React.ReactNode; className: string; children: React.ReactNode }) => (
  <section className={clsx("flex flex-col", className)}>
    <h2 className="-ml-px text-[12px] leading-[14px] whitespace-pre">{title}</h2>
    {children}
  </section>
);

const NARROW = "w-[72.6%]";
const MEDIUM = "w-[92%] grid-cols-[413fr_110fr]";
const FULL = "w-full grid-cols-[413fr_155fr]";

export default function App() {
  return (
    <main className="w-full overflow-hidden bg-linear-to-b from-[#ffae00] to-[#ff8200] pl-[9px] font-[Lato,'Noto_Sans_CJK_KR',sans-serif] text-black [&_h2]:font-['Liberation_Sans','Noto_Sans_CJK_KR',sans-serif]">
      <Step title={"1.  Cube를 생성한 후  “Make Object Editable 합니다."} className="gap-[2px] pt-[2px]">
        <Screen
          width={NARROW}
          tool="move"
          mode="model"
          darkHeader
          label="Perspective"
          overlay={
            <>
              <PointerIcon className="top-[57px] left-[13px]" />
              <Tooltip className="top-[73px] left-[15px]">Make Object Editable [Shortcut C]</Tooltip>
            </>
          }
        >
          <PerspectiveScene shape="full" />
        </Screen>
      </Step>

      <Step title={"2.  Front View 모드를 선택합니다."} className="gap-1 pt-[15px]">
        <figure className="relative flex bg-[#4b4b4b] text-[7px] leading-[9px]">
          <Rail mode="points" />
          <div className="ml-[3px] min-w-0 flex-1 pb-[2px]">
            <ViewHeader nav={false} />
            <Viewport label="Right" wide>
              <RightScene />
            </Viewport>
          </div>
          <PointerIcon className="top-[103px] left-[10px]" />
          <Tooltip className="top-[119px] left-3">Use Point Tool</Tooltip>
        </figure>
      </Step>

      <Step title={"3.  포인트 툴을 선택합니다."} className="gap-[2px] pt-[13px]">
        <Screen
          width={NARROW}
          tool="live"
          label="Top"
          overlay={
            <>
              <PointerIcon className="top-[128px] left-[10px]" />
              <Tooltip className="top-[144px] left-3">Use Point Tool</Tooltip>
            </>
          }
        >
          <TopScene shape="whole" />
        </Screen>
      </Step>

      <Step title={"4.  선택툴 중 Rectangle Selection 툴을 선택합니다."} className="gap-1 pt-[14px]">
        <Screen
          width={NARROW}
          tool="live"
          label="Top"
          overlay={
            <>
              <SelectionPopup />
              <PointerIcon className="top-[17px] left-[94px]" />
            </>
          }
        >
          <TopScene shape="whole" />
        </Screen>
      </Step>

      <Step
        title={"5.삭제할 포인트를 선택해야 하는데 이때 주의해야 할 사항은 그림의 오른쪽 창에 보시면,\n  Rectangle Selection 툴의 옵션 중   “Only Select Visible Elements”  가 해제되어 있어야 합니다."}
        className="gap-[3px] pt-3"
      >
        <Screen width={MEDIUM} label="Top" side={<SelectionSide compact />}>
          <TopScene shape="selected" cursor={[172.5, 205]} />
        </Screen>
      </Step>

      <Step title={"6.오른쪽 끝의 포인트들을 모두 선택 하신 후 키보드의   “Delete”  키를 누릅니다."} className="gap-1 pt-[11px]">
        <Screen width={NARROW} label="Top">
          <TopScene shape="cut" cursor={[140.5, 143]} />
        </Screen>
      </Step>

      <Step title={"7.Perspective 뷰를 선택하시면, Cube의 반이 잘려 나간 것을 확인 하실 수 있습니다."} className="gap-[3px] pt-3">
        <Screen width={NARROW} label="Perspective">
          <PerspectiveScene shape="half" cursor={[121, 222.5]} />
        </Screen>
      </Step>

      <Step title={"8.상단 메뉴 중 그림과 같이   “Symmetry”  를 선택합니다."} className="gap-[2px] pt-3 pr-px">
        <Screen width={FULL} label="Perspective" arrayOpen side={<SelectionSide />} overlay={<ArrayPopup />}>
          <PerspectiveScene shape="half" />
        </Screen>
      </Step>

      <Step title={"9.그림과 같이 Symmetry 메뉴가 Objects 창에 추가 됩니다."} className="gap-[2px] pt-[9px] pr-px">
        <Screen width={FULL} label="Perspective" darkHeader side={<CubeSide light />} overlay={<PointerIcon className="top-[93px] left-[513px]" />}>
          <PerspectiveScene shape="half" />
        </Screen>
      </Step>

      <Step title={"10.Symmetry 메뉴 아래로 Cube를 드래그 하여 Children으로 종속 시킵니다."} className="gap-[2px] pt-[10px] pr-px">
        <Screen width={FULL} label="Perspective" darkHeader side={<CubeSide nested light />} overlay={<PointerIcon className="top-[81px] left-[483px]" />}>
          <PerspectiveScene shape="mirrored" />
        </Screen>
      </Step>

      <Step title={"11. Display 모드에서 Gouraud Shading (Lines)를 선택합니다."} className="gap-[2px] pt-[17px] pr-px">
        <Screen width={FULL} label="Perspective" openMenu="Display" side={<CubeSide nested />} overlay={<DisplayMenu />}>
          <TurnedScene />
        </Screen>
      </Step>

      <Step title={"12. 흰색선 부분이 잘려지고 남은Cube 부분이며, 검은색으로 표시된 부분이 Symmetry 된 부분입니다."} className="gap-[2px] pt-[14px] pr-px">
        <Screen width={FULL} label="Perspective" side={<CubeSide nested />}>
          <TurnedScene cursor={[70.5, 44]} />
        </Screen>
      </Step>

      <p className="-ml-px pt-1 font-['Liberation_Sans','Noto_Sans_CJK_KR',sans-serif] text-[12px] leading-[14px]">
        Symmetry시에는 Center 축이 항상 0으로 설정되어야 틈이 벌어지지 않으며, Mirror Plane 속성을 이용해서
        <br />
        Symmetry되는 좌표축을 변경할 수 있습니다. 참고하세요..
      </p>
    </main>
  );
}
